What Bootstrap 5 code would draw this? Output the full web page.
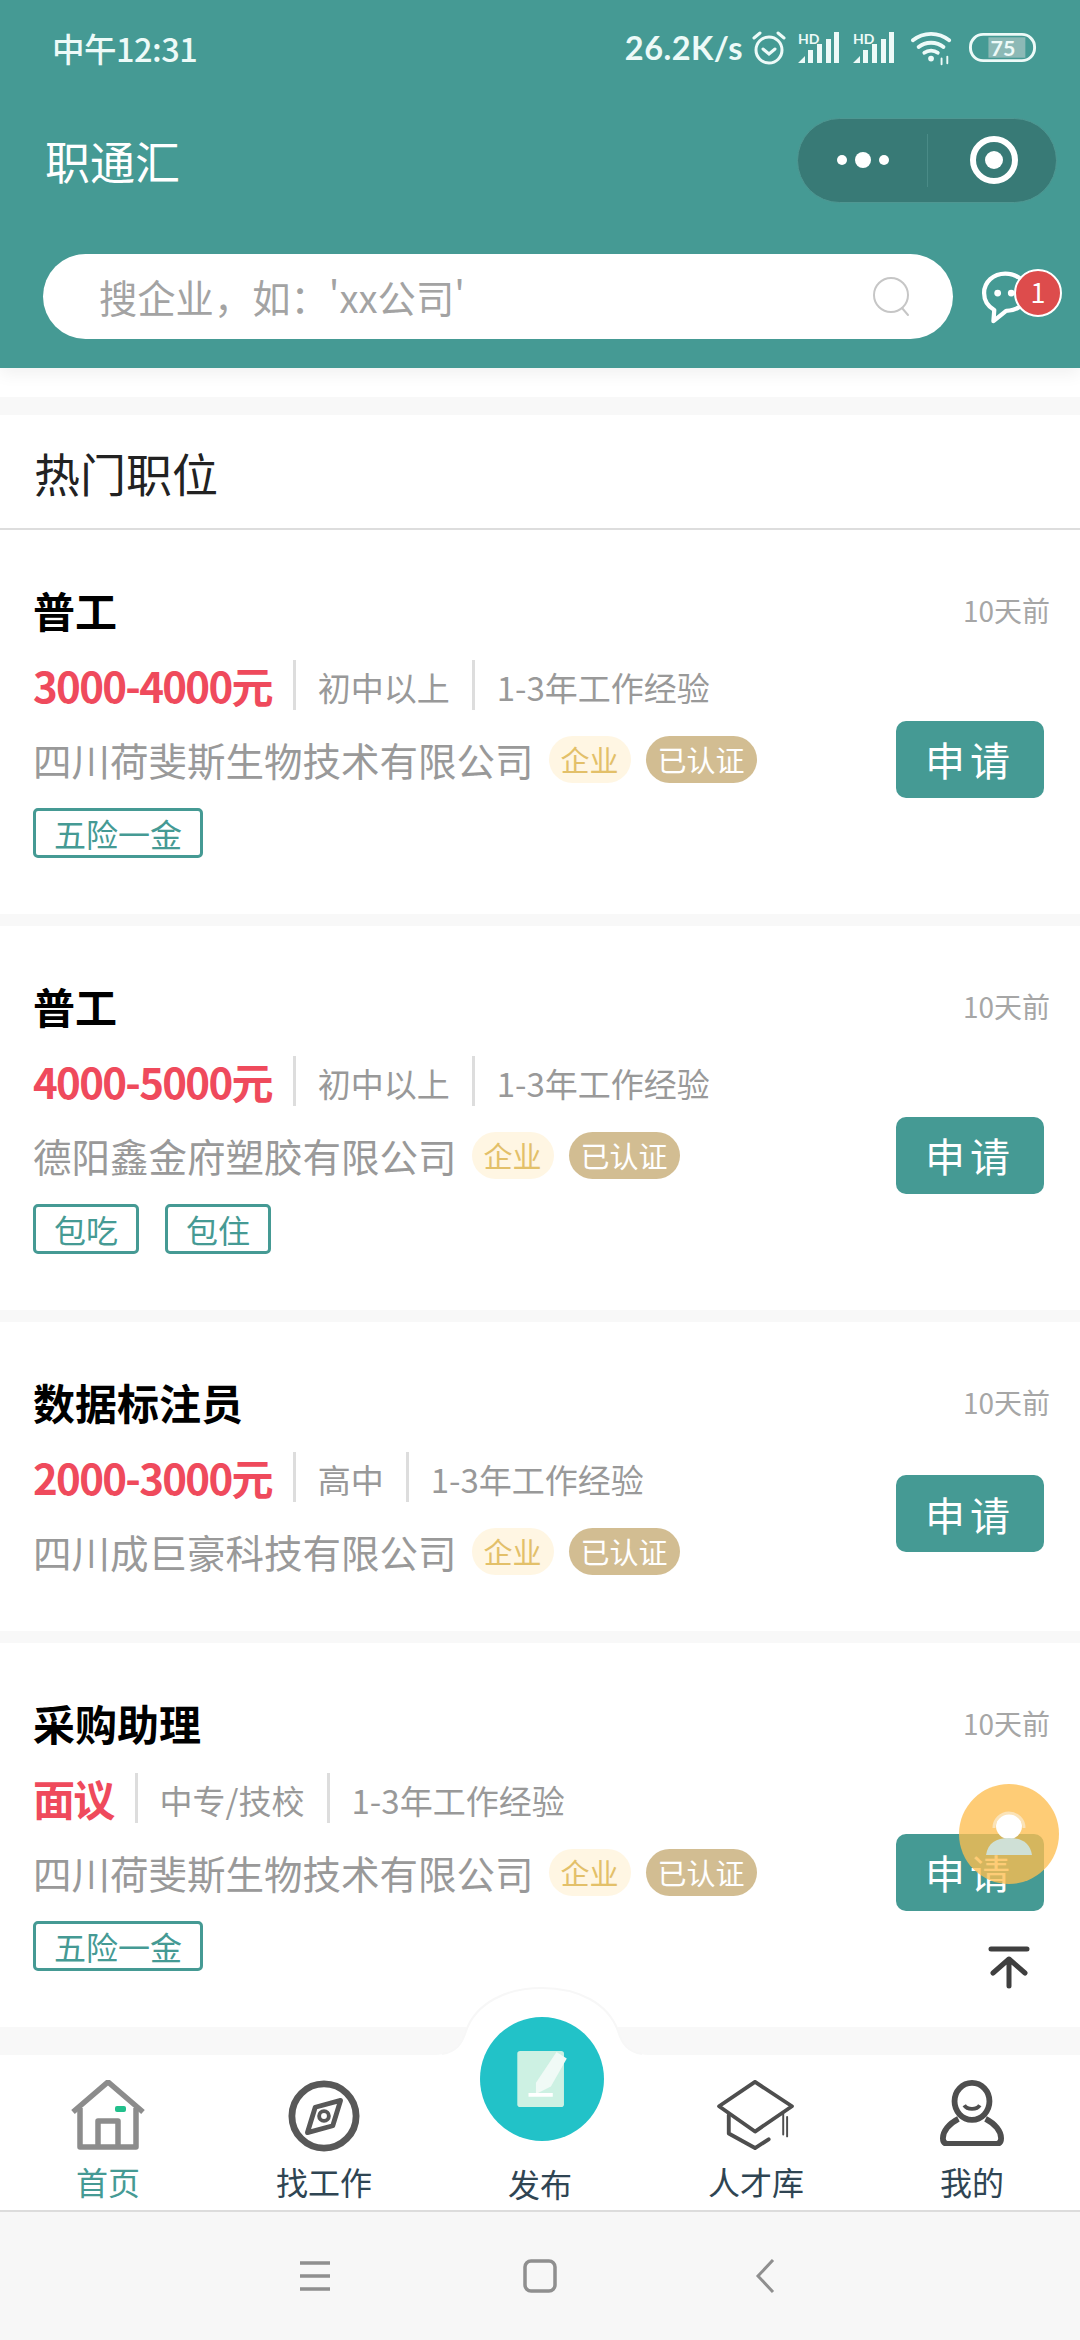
<!DOCTYPE html>
<html lang="zh-CN">
<head>
  <meta charset="UTF-8">
  <title>职通汇</title>
  <meta name="viewport" content="width=device-width, initial-scale=1">
  <link href="https://cdn.jsdelivr.net/npm/bootstrap@5.3.3/dist/css/bootstrap.min.css" rel="stylesheet">
  <style>
    html, body { height: 2340px; overflow: hidden; }
    body {
      width: 1080px; background: #f8f8f8; color: #222;
      font-family: "Noto Sans CJK SC", "Noto Sans", sans-serif;
    }
    .app-frame { width: 1080px; height: 2340px; position: relative; overflow: hidden; }

    /* header */
    .top-head { height: 368px; background: #459a94; color: #fff; flex: none; box-shadow: 0 6px 16px rgba(0,0,0,.06); position: relative; z-index: 2; }
    .status-row { height: 96px; padding: 0 43px 0 52px; color: #edfaf8; }
    .status-time { font-size: 32.500px; font-weight: 500; letter-spacing: -.5px; }
    .status-speed { font-family: Lato, sans-serif; font-size: 32.500px; font-weight: 700; letter-spacing: .5px; margin-right: 9px; }
    .stat-alarm { margin-right: 12px; }
    .stat-sim { margin-right: 13px; }
    .stat-wifi { margin: 0 15px 0 2px; }
    .title-row { height: 128px; padding: 0 23px 0 45px; margin-bottom: 30px; }
    .app-title { font-size: 45px; line-height: 1; }
    .capsule { width: 260px; height: 85px; border-radius: 43px; background: #387a76; border: 1px solid #4f9792; }
    .capsule-dots { width: 129px; height: 100%; }
    .capsule-line { width: 1px; height: 53px; background: #4a8b87; align-self: center; }
    .capsule-aim { flex: 1; height: 100%; padding-left: 4px; }
    .search-row { padding: 0 18px 0 43px; }
    .search-box { width: 910px; height: 85px; border-radius: 43px; background: #fff; padding: 0 40px 0 56px; color: #a3a3a3; font-size: 38.300px; }
    .msg-wrap { width: 84px; height: 70px; position: relative; }
    .msg-bubble { position: absolute; left: 3px; top: 9px; }
    .msg-badge {
      position: absolute; right: 0; top: 7px; width: 48px; height: 48px; border-radius: 50%;
      background: #dd4c4c; border: 2px solid #fff; color: #fff; font-size: 27px; line-height: 42px; text-align: center;
    }

    /* list */
    .white-strip { height: 29px; background: #fff; flex: none; }
    .hot-head { margin-top: 18px; height: 115px; background: #fff; border-bottom: 2px solid #ddd; padding: 2px 0 0 34px; font-size: 46px; flex: none; color: #222; }
    .job-card { background: #fff; padding: 58px 33px 0 33px; margin-bottom: 12px; flex: none; }
    .job-main { padding-bottom: 56px; }
    .job-side { width: 150px; padding-bottom: 28px; }
    .job-name { font-size: 42px; font-weight: 700; line-height: 44px; color: #000; }
    .job-time { font-size: 28px; line-height: 44px; color: #a6a6a6; text-align: right; margin-right: -3px; }
    .job-meta { height: 54px; margin-top: 26px; color: #999; font-size: 33px; }
    .job-pay { font-size: 42px; font-weight: 700; color: #ef4a5c; letter-spacing: -1.700px; padding-right: 21px; line-height: 54px; }
    .job-fact { padding: 0 22px; height: 50px; line-height: 54px; border-left: 3px solid #ddd; }
    .job-co { height: 48px; margin-top: 23px; font-size: 38.500px; line-height: 48px; color: #999; }
    .co-pill { height: 47px; line-height: 46px; border-radius: 24px; font-size: 29px; padding: 0 12px; margin-left: 15px; }
    .pill-kind { background: #fff6e3; color: #e3c069; }
    .pill-ok { background: #d2bd92; color: #fff; }
    .job-tags { margin-top: 25px; gap: 26px; }
    .job-tag { height: 50px; line-height: 44px; border: 3px solid #459a94; border-radius: 5px; color: #459a94; font-size: 32px; padding: 0 18px; }
    .apply-btn { width: 148px; height: 77px; border-radius: 10px; background: #459a94; color: #fff; font-size: 40px; letter-spacing: 5px; border: 0; padding: 0; margin-left: -1px; }

    /* floating things */
    .help-float { position: absolute; left: 959px; top: 1784px; width: 100px; height: 100px; border-radius: 50%; background: rgba(254,190,80,.78); z-index: 5; }
    .top-float { position: absolute; left: 988px; top: 1945px; z-index: 5; }

    /* tab bar */
    .tab-bar { height: 155px; background: #fff; flex: none; position: relative; z-index: 3; }
    .tab-hump { position: absolute; left: 402px; top: -68px; z-index: 0; }
    .tab-cell { width: 216px; height: 155px; position: relative; padding-top: 25px; }
    .tab-icon { height: 74px; }
    .tab-text { font-size: 32px; line-height: 40px; margin-top: 7px; color: #2f4553; }
    .tab-on { color: #459a94; }
    .tab-text-pub { margin-top: 9px; }
    .tab-pub { position: absolute; left: 48px; top: -38px; width: 124px; height: 124px; border-radius: 50%; background: #22c2c8; z-index: 2; }
    .sys-bar { height: 130px; background: #f7f7f7; border-top: 2px solid #dcdcdc; flex: none; position: relative; z-index: 3; }
    .sys-cell { width: 225px; }
  </style>
</head>
<body>
<div class="app-frame d-flex flex-column">

  <header class="top-head">
    <div class="status-row d-flex align-items-center justify-content-between">
      <span class="status-time">中午12:31</span>
      <div class="d-flex align-items-center">
        <span class="status-speed">26.2K/s</span>
        <svg class="stat-alarm" width="34" height="36" viewBox="0 0 34 36" fill="none" stroke="#edfaf8" stroke-width="3" stroke-linecap="round"><circle cx="17" cy="20" r="13"/><path d="M11 19l6 5 6-5M2 8l6-5M32 8l-6-5"/></svg>
        <svg class="stat-sim" width="42" height="40" viewBox="0 0 42 40" fill="#edfaf8"><text x="0" y="16" font-size="14" font-weight="700" font-family="Lato, sans-serif">HD</text><path d="M0 35l7-7v7zM10 35V22h5v13zM19 35V16h5v19zM28 35V11h5v24zM36 35V4h5v31z"/></svg>
        <svg class="stat-sim" width="42" height="40" viewBox="0 0 42 40" fill="#edfaf8"><text x="0" y="16" font-size="14" font-weight="700" font-family="Lato, sans-serif">HD</text><path d="M0 35l7-7v7zM10 35V22h5v13zM19 35V16h5v19zM28 35V11h5v24zM36 35V4h5v31z"/></svg>
        <svg class="stat-wifi" width="44" height="36" viewBox="0 0 46 36" fill="none" stroke="#edfaf8" stroke-width="4" stroke-linecap="round"><path d="M3 10c11-9 27-9 38 0M9 17c7-6 19-6 26 0M15 23c4-3 10-3 14 0"/><circle cx="22" cy="29" r="3" fill="#edfaf8" stroke="none"/><path d="M33 29v6M39 27v7" stroke-width="2"/></svg>
        <svg width="68" height="32" viewBox="0 0 70 32"><rect x="1.500" y="2" width="66" height="27" rx="13" fill="none" stroke="#edfaf8" stroke-width="3"/><rect x="20" y="5" width="38" height="21" fill="#8cb9b6"/><text x="35" y="24" text-anchor="middle" font-size="22" font-weight="700" fill="#edfaf8" font-family="Lato, sans-serif">75</text></svg>
      </div>
    </div>

    <div class="title-row d-flex align-items-center justify-content-between">
      <span class="app-title">职通汇</span>
      <div class="capsule d-flex">
        <div class="capsule-dots d-flex align-items-center justify-content-center">
          <svg width="54" height="20" viewBox="0 0 54 20" fill="#fff"><circle cx="6" cy="10" r="5"/><circle cx="27" cy="10" r="8"/><circle cx="48" cy="10" r="5"/></svg>
        </div>
        <div class="capsule-line"></div>
        <div class="capsule-aim d-flex align-items-center justify-content-center">
          <svg width="50" height="50" viewBox="0 0 50 50"><circle cx="25" cy="25" r="21" fill="none" stroke="#fff" stroke-width="6"/><circle cx="25" cy="25" r="9" fill="#fff"/></svg>
        </div>
      </div>
    </div>

    <div class="search-row d-flex align-items-center justify-content-between">
      <div class="search-box d-flex align-items-center justify-content-between">
        <span>搜企业，如：'xx公司'</span>
        <svg width="40" height="42" viewBox="0 0 40 42" fill="none" stroke="#c6c6c6" stroke-width="2"><circle cx="18" cy="19" r="17"/><path d="M29 32l6 7" stroke-linecap="round"/></svg>
      </div>
      <div class="msg-wrap">
        <svg class="msg-bubble" width="52" height="56" viewBox="0 0 60 66" fill="none" stroke="#fff" stroke-width="5" stroke-linejoin="round"><path d="M28 3C14 3 3 13 3 26c0 9 5 16 12 20l-1 13 15-12c13 0 25-9 25-21C54 13 42 3 28 3z"/><circle cx="19" cy="26" r="4" fill="#fff" stroke="none"/><circle cx="35" cy="26" r="4" fill="#fff" stroke="none"/></svg>
        <span class="msg-badge">1</span>
      </div>
    </div>
  </header>

  <main class="flex-grow-1 overflow-hidden d-flex flex-column" id="jobList">
    <div class="white-strip"></div>
    <div class="hot-head d-flex align-items-center">热门职位</div>
  </main>

  <nav class="tab-bar d-flex">
    <svg class="tab-hump" width="280" height="90" viewBox="0 0 280 90"><path d="M0 68h30c20 0 28-8 34-24C74 16 104 1 140 1s66 15 76 43c6 16 14 24 34 24h30v22H0z" fill="#fff"/><path d="M40 67c14-2 20-10 24-23C74 16 104 1 140 1s66 15 76 43c4 13 10 21 24 23" fill="none" stroke="#f7f7f7" stroke-width="2"/></svg>

    <div class="tab-cell text-center">
      <div class="tab-icon">
        <svg width="74" height="70" viewBox="0 0 74 70" fill="none" stroke="#8c8c8c" stroke-width="5.500" stroke-linejoin="round"><path d="M2 32L37 2l35 30"/><path d="M9 28v39h56V28"/><path d="M27 67V41h20v26"/><rect x="44" y="26" width="11" height="6" rx="2" fill="#22c08c" stroke="none"/></svg>
      </div>
      <div class="tab-text tab-on">首页</div>
    </div>
    <div class="tab-cell text-center">
      <div class="tab-icon">
        <svg width="72" height="72" viewBox="0 0 74 74" fill="none" stroke="#585858" stroke-width="7" stroke-linejoin="round"><circle cx="37" cy="37" r="33"/><path d="M54 21l-8 26-26 7 8-26z" stroke-width="5"/><circle cx="37" cy="37" r="5" stroke-width="4"/></svg>
      </div>
      <div class="tab-text">找工作</div>
    </div>
    <div class="tab-cell text-center">
      <div class="tab-pub d-flex align-items-center justify-content-center">
        <svg width="53" height="56" viewBox="0 0 54 60"><rect x="0" y="0" width="50" height="60" rx="3" fill="#cdf1e3"/><path d="M20 34L42 1l11 7-17 30-16 8z" fill="#f0faf6"/><rect x="12" y="45" width="26" height="4" fill="#fff"/></svg>
      </div>
      <div class="tab-icon"></div>
      <div class="tab-text tab-text-pub">发布</div>
    </div>
    <div class="tab-cell text-center">
      <div class="tab-icon">
        <svg width="78" height="70" viewBox="0 0 80 72" fill="none" stroke="#4e4e4e" stroke-width="4" stroke-linejoin="round" stroke-linecap="round"><path d="M39 2l38 25-38 26L2 27z"/><path d="M12 36v19l27 15 14-9"/><path d="M68 34v22M72 38v20" stroke-width="2"/></svg>
      </div>
      <div class="tab-text">人才库</div>
    </div>
    <div class="tab-cell text-center">
      <div class="tab-icon">
        <svg width="64" height="66" viewBox="0 0 66 68" fill="none" stroke="#4e4e4e" stroke-width="6" stroke-linejoin="round"><ellipse cx="33" cy="22" rx="18" ry="19"/><path d="M25 26c3 5 13 5 16 0" stroke-width="4"/><path d="M19 40C9 45 3 53 3 60c0 4 2 6 6 6h48c4 0 6-2 6-6 0-7-6-15-16-20"/></svg>
      </div>
      <div class="tab-text">我的</div>
    </div>
  </nav>

  <footer class="sys-bar d-flex align-items-center justify-content-center">
    <div class="sys-cell d-flex justify-content-center">
      <svg width="32" height="30" viewBox="0 0 32 30" stroke="#8f8f8f" stroke-width="3.500"><path d="M1 2h30M1 15h30M1 28h30"/></svg>
    </div>
    <div class="sys-cell d-flex justify-content-center">
      <svg width="34" height="34" viewBox="0 0 34 34" fill="none" stroke="#8f8f8f" stroke-width="3.500"><rect x="2" y="2" width="30" height="30" rx="6"/></svg>
    </div>
    <div class="sys-cell d-flex justify-content-center">
      <svg width="20" height="34" viewBox="0 0 20 34" fill="none" stroke="#8f8f8f" stroke-width="3"><path d="M18 1L3 17l15 16"/></svg>
    </div>
  </footer>

  <div class="help-float d-flex align-items-center justify-content-center">
    <svg width="46" height="46" viewBox="0 0 46 46"><circle cx="23" cy="15" r="13" fill="#fff"/><path d="M8 17a15 15 0 0 1 30 0" fill="none" stroke="#fbe3b8" stroke-width="3"/><path d="M0 44c2-12 10-17 23-17s21 5 23 17z" fill="#cfe0d6"/></svg>
  </div>
  <svg class="top-float" width="42" height="44" viewBox="0 0 42 44" fill="none" stroke="#3f3f3f" stroke-width="5" stroke-linecap="round" stroke-linejoin="round"><path d="M3 4h36M21 14v27M5 28l16-14 16 14"/></svg>
</div>

<script>
  const jobs = [
    { name: '普工', pay: '3000-4000元', edu: '初中以上', co: '四川荷斐斯生物技术有限公司', tags: ['五险一金'] },
    { name: '普工', pay: '4000-5000元', edu: '初中以上', co: '德阳鑫金府塑胶有限公司', tags: ['包吃', '包住'] },
    { name: '数据标注员', pay: '2000-3000元', edu: '高中', co: '四川成巨豪科技有限公司', tags: [] },
    { name: '采购助理', pay: '面议', edu: '中专/技校', co: '四川荷斐斯生物技术有限公司', tags: ['五险一金'] }
  ];

  const jobList = document.getElementById('jobList');
  jobs.forEach((job) => {
    const card = document.createElement('section');
    card.className = 'job-card d-flex justify-content-between';
    const tags = job.tags.length
      ? `<div class="job-tags d-flex">${job.tags.map((t) => `<span class="job-tag">${t}</span>`).join('')}</div>`
      : '';
    card.innerHTML = `
      <div class="job-main">
        <div class="job-name">${job.name}</div>
        <div class="job-meta d-flex align-items-center">
          <span class="job-pay">${job.pay}</span>
          <span class="job-fact">${job.edu}</span>
          <span class="job-fact">1-3年工作经验</span>
        </div>
        <div class="job-co d-flex align-items-center">
          <span>${job.co}</span>
          <span class="co-pill pill-kind">企业</span>
          <span class="co-pill pill-ok">已认证</span>
        </div>
        ${tags}
      </div>
      <div class="job-side d-flex flex-column">
        <div class="job-time">10天前</div>
        <div class="flex-grow-1 d-flex align-items-center">
          <button class="apply-btn" type="button">申请</button>
        </div>
      </div>`;
    jobList.appendChild(card);
  });
</script>
<script src="https://cdn.jsdelivr.net/npm/bootstrap@5.3.3/dist/js/bootstrap.bundle.min.js"></script>
</body>
</html>
